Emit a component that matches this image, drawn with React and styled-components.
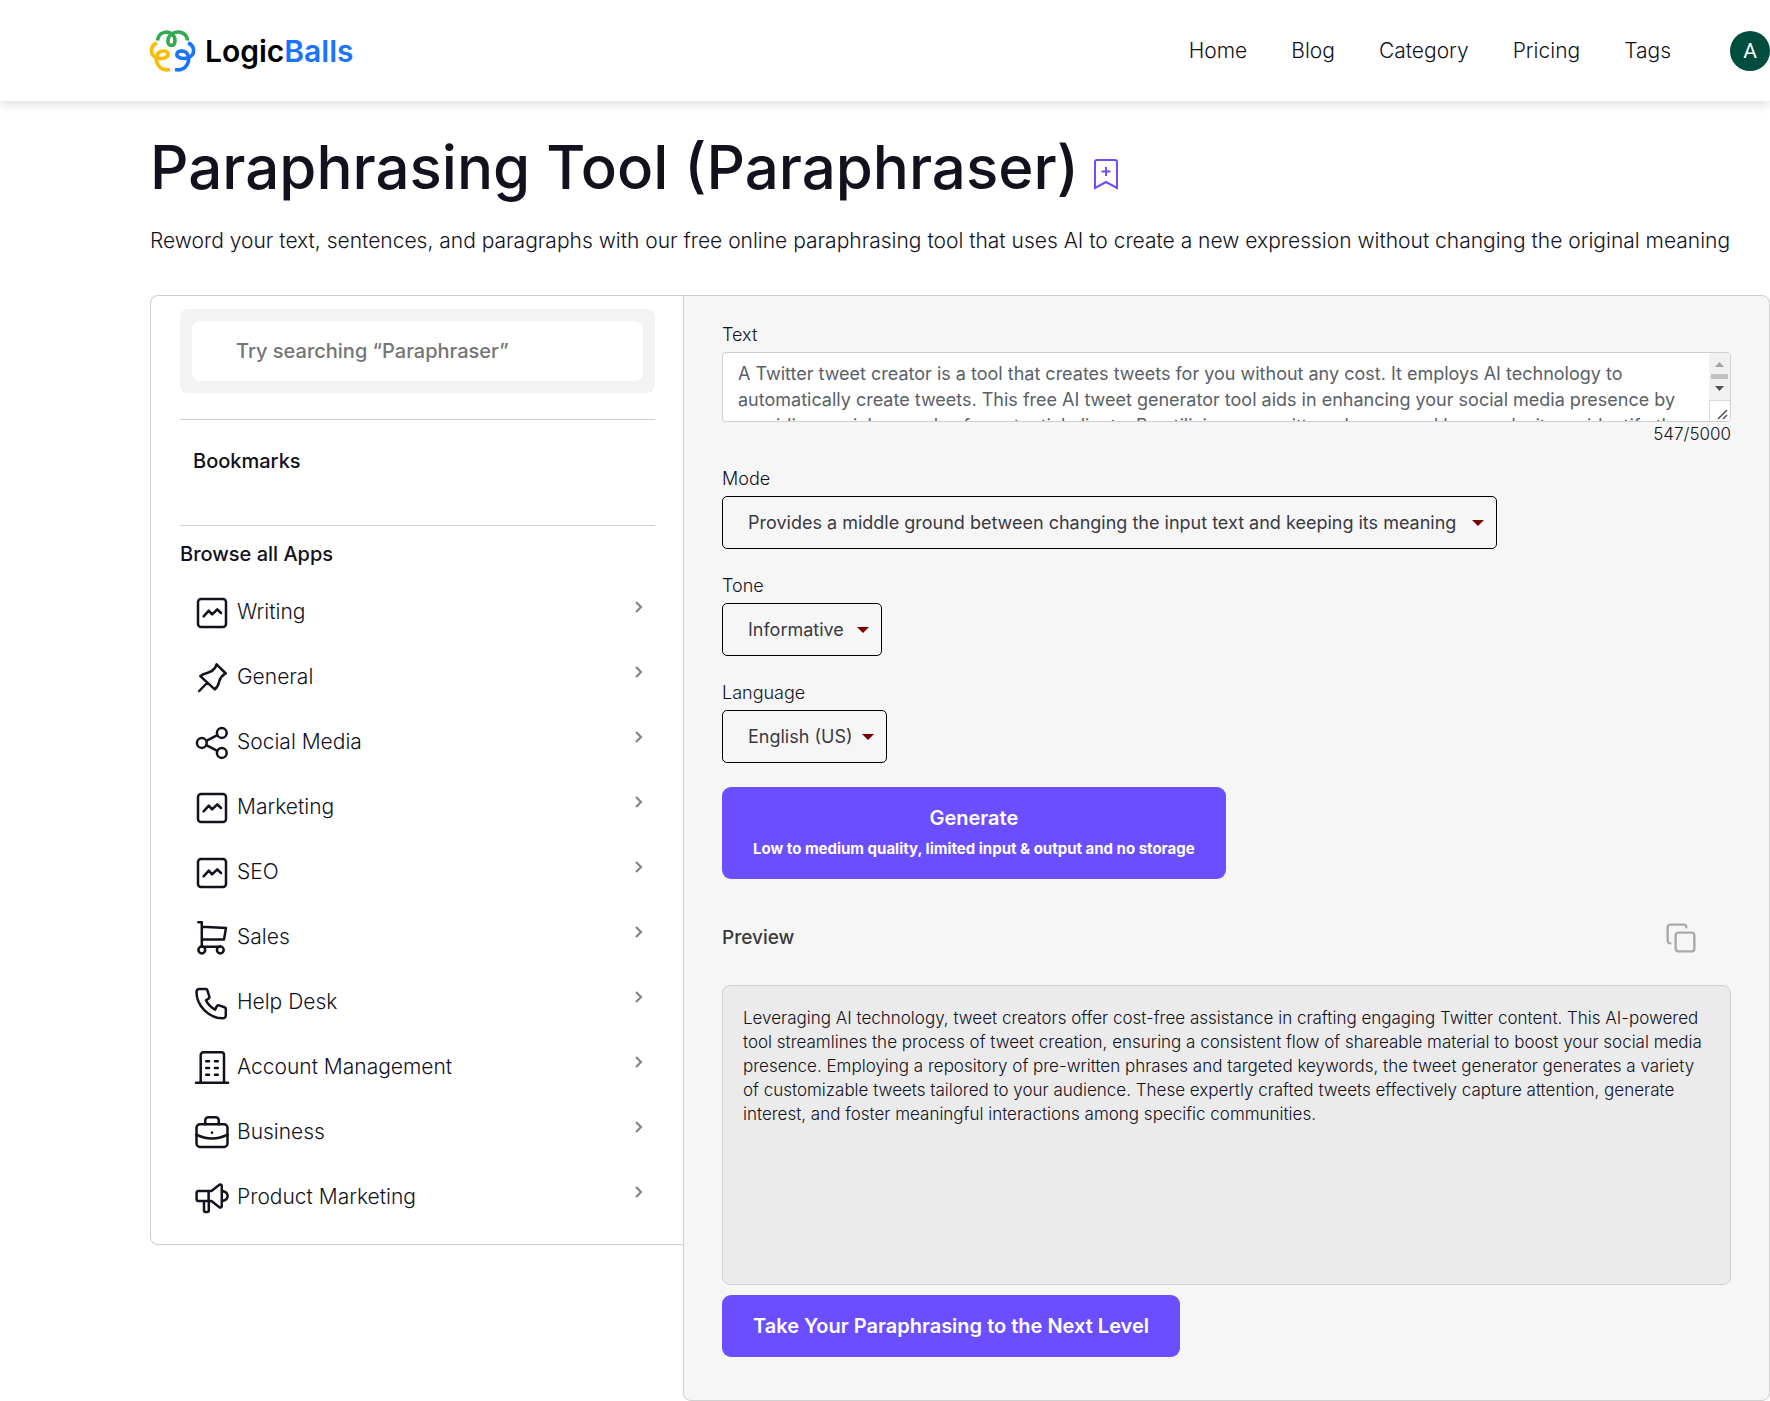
import React, { useState } from "react";
import styled, { createGlobalStyle } from "styled-components";
import { Copy } from "lucide-react";

const ink = "#12111d";
const line = "#d0d0d0";
const violet = "#6b4eff";

const GlobalStyle = createGlobalStyle`
  *, *::before, *::after { box-sizing: border-box; }
  body {
    margin: 0;
    background: #fff;
    color: ${ink};
    font-family: Inter, "Liberation Sans", sans-serif;
    font-weight: 300;
  }
  h1, h2, h3, p, ul { margin: 0; padding: 0; }
  a { color: inherit; text-decoration: none; }
  button, input, select, textarea { font: inherit; color: inherit; }
`;

const Header = styled.header`
  display: flex;
  align-items: center;
  justify-content: space-between;
  height: 101px;
  padding-left: 148px;
  box-shadow: 0 2px 12px rgba(0, 0, 0, 0.16);
`;

const Brand = styled.a`
  display: flex;
  align-items: center;
  gap: 8px;
  font-size: 30px;
  font-weight: 600;
  color: #000;
  span { color: #1b74ff; }
`;

const Nav = styled.nav`
  display: flex;
  align-items: center;
  gap: 44px;
  font-size: 21px;
`;

const Avatar = styled.button`
  width: 40px;
  height: 40px;
  margin-left: 15px;
  padding: 0;
  border: 0;
  border-radius: 50%;
  background: #004d40;
  color: #fff;
  font-family: Roboto, sans-serif;
  font-size: 21px;
  font-weight: 400;
`;

const Main = styled.main`
  padding: 30px 0 0 150px;
`;

const TitleRow = styled.div`
  display: flex;
  align-items: flex-end;
  gap: 14px;
`;

const Title = styled.h1`
  font-size: 60px;
  line-height: 72px;
  font-weight: 500;
`;

const IconButton = styled.button`
  display: flex;
  padding: 0;
  border: 0;
  background: none;
  color: ${(p) => p.$color};
  cursor: pointer;
`;

const BookmarkIcon = styled.svg`
  width: 26px;
  height: 32px;
  margin-bottom: 13px;
  fill: none;
  stroke: currentColor;
  stroke-width: 2;
`;

const Subtitle = styled.p`
  margin: 23px 0 39px;
  font-size: 21px;
  line-height: 30px;
`;

const Workspace = styled.div`
  display: grid;
  grid-template-columns: minmax(0, 533fr) minmax(0, 1087fr);
  align-items: start;
`;

const Sidebar = styled.aside`
  padding: 13px 28px 15px 29px;
  border: 1px solid ${line};
  border-right: 0;
  border-radius: 8px 0 0 8px;
`;

const SearchBox = styled.div`
  padding: 12px;
  border-radius: 8px;
  background: #f3f3f3;
`;

const SearchInput = styled.input`
  display: block;
  width: 100%;
  height: 60px;
  padding: 0 44px;
  border: 0;
  border-radius: 8px;
  background: #fff;
  font-size: 20px;
  font-weight: 500;
  &::placeholder { color: #757575; opacity: 1; }
`;

const Bookmarks = styled.section`
  height: 107px;
  margin-top: 26px;
  padding: 29px 13px;
  border: solid ${line};
  border-width: 1px 0;
`;

const SideHeading = styled.h2`
  font-size: 20px;
  line-height: 24px;
  font-weight: 500;
`;

const Apps = styled.nav`
  padding-top: 16px;
`;

const AppList = styled.ul`
  margin-top: 13px;
  list-style: none;
`;

const AppLink = styled.a`
  display: flex;
  align-items: center;
  height: 65px;
  padding: 0 11px 0 14px;
  font-size: 21px;
  line-height: 26px;
`;

const AppIcon = styled.svg`
  flex: none;
  width: 36px;
  height: 36px;
  margin: 3px 7px 0 0;
  fill: none;
  stroke: ${ink};
  stroke-width: 2.5;
  stroke-linecap: round;
  stroke-linejoin: round;
`;

const Chevron = styled.svg`
  width: 10px;
  height: 14px;
  margin: 0 0 9px auto;
  fill: none;
  stroke: #858585;
  stroke-width: 2.2;
`;

const Panel = styled.section`
  padding: 27px 38px 43px;
  border: 1px solid ${line};
  border-radius: 0 8px 8px 8px;
  background: #f6f6f6;
`;

const Field = styled.div`
  margin-bottom: ${(p) => p.$gap}px;
`;

const Label = styled.label`
  display: block;
  margin-bottom: 5px;
  font-size: 18px;
  line-height: 24px;
`;

const TextFrame = styled.div`
  position: relative;
  height: 70px;
  border: 1px solid ${line};
  border-radius: 4px;
  background: #fff;
  overflow: hidden;
`;

const TextArea = styled.textarea`
  display: block;
  width: 100%;
  height: 100%;
  padding: 8px 36px 8px 15px;
  border: 0;
  outline: 0;
  background: none;
  color: #5a6068;
  font-size: 18px;
  font-weight: 400;
  line-height: 26px;
  resize: none;
  scrollbar-width: none;
`;

const ScrollTrack = styled.svg`
  position: absolute;
  top: 0;
  right: 0;
  width: 21px;
  height: 68px;
  pointer-events: none;
`;

const Counter = styled.div`
  font-size: 17px;
  line-height: 24px;
  text-align: right;
`;

const SelectFrame = styled.div`
  display: grid;
  align-items: center;
  width: ${(p) => p.$width}px;
  max-width: 100%;
  > * { grid-area: 1 / 1; }
`;

const Select = styled.select`
  width: 100%;
  height: 53px;
  padding: 0 30px 0 25px;
  border: 1px solid #000;
  border-radius: 5px;
  background: transparent;
  color: #3a3943;
  font-size: 18px;
  font-weight: 400;
  appearance: none;
`;

const Caret = styled.svg`
  justify-self: end;
  width: 12px;
  height: 6px;
  margin-right: 13px;
  fill: #7a0000;
  pointer-events: none;
`;

const PrimaryButton = styled.button`
  display: block;
  padding: 16px 31px;
  border: 0;
  border-radius: 9px;
  background: ${violet};
  color: #fff;
  font-size: 20px;
  line-height: 30px;
  font-weight: 600;
  text-align: center;
  cursor: pointer;
  small {
    display: block;
    margin-top: 2px;
    font-size: 15px;
    line-height: 28px;
    font-weight: 700;
  }
`;

const PreviewHead = styled.div`
  display: flex;
  align-items: center;
  justify-content: space-between;
  margin: 43px 0 31px;
  padding-right: 34px;
`;

const PreviewTitle = styled.h3`
  font-size: 19px;
  line-height: 30px;
  font-weight: 500;
  color: #3a3a3a;
`;

const Preview = styled.output`
  display: block;
  min-height: 300px;
  margin-bottom: 10px;
  padding: 20px;
  border: 1px solid ${line};
  border-radius: 8px;
  background: #ebebeb;
  font-size: 17px;
  line-height: 24px;
`;

const icons = {
  chart: (
    <>
      <rect x="4" y="4" width="28" height="28" rx="3" />
      <path d="M9.6 21.3l5.2-5.6 3.3 3.6 5.2-5 3.7 3.7" />
    </>
  ),
  pin: (
    <path d="M22.6 4.3l9.2 9.2-1.6.8c-3 2.2-4.4 4-5 7.2-.5 3-1.8 5.6-4.4 7.9L6.3 16.2c1.8-1.8 4.2-2.6 6.8-3.2 3.6-.8 6-2.6 8-5.2zM13 23L5.2 31" />
  ),
  share: (
    <>
      <circle cx="7.8" cy="18" r="4.9" />
      <circle cx="27.8" cy="8" r="4.9" />
      <circle cx="27.8" cy="28" r="4.9" />
      <path d="M12.2 15.8l11.2-5.6M12.2 20.2l11.2 5.6" />
    </>
  ),
  cart: (
    <>
      <path d="M4.3 2.3h3.5v24.4h18.5M7.8 6.7l24.2 1.2-2 11.6H7.8" />
      <circle cx="7.8" cy="30" r="3.4" />
      <circle cx="26.3" cy="30" r="3.4" />
    </>
  ),
  phone: (
    <path d="M5.4 4h6.2a1.8 1.8 0 0 1 1.8 1.3l1.9 6.2a2 2 0 0 1-.9 2.2l-2.4 1.6c1.8 4 4.9 7.2 9.1 9.3l1.6-3.2a2 2 0 0 1 2.4-1l5.4 1.9a1.8 1.8 0 0 1 1.3 1.8v6.3a2.9 2.9 0 0 1-2.9 2.9C15 33.3 2.5 20.8 2.5 7A3 3 0 0 1 5.4 4z" />
  ),
  building: (
    <path d="M2 32.7h32M6.7 32.7V5a2.7 2.7 0 0 1 2.7-2.7h17.9A2.7 2.7 0 0 1 30 5v27.7M12.2 11.3h2.9M20.9 11.3h2.9M12.2 18h2.9M20.9 18h2.9M12.2 24.7h2.9M20.9 24.7h2.9" />
  ),
  briefcase: (
    <>
      <rect x="2.5" y="9.3" width="31" height="22.7" rx="3.5" />
      <path d="M11.2 9.3V5.5a3.2 3.2 0 0 1 3.2-3.2h7.2a3.2 3.2 0 0 1 3.2 3.2v3.8M2.5 19.7c9.5 5 21.5 5 31 0M18 17.6v.2" />
    </>
  ),
  megaphone: (
    <path d="M17.4 11H4.3a1.700 1.700 0 0 0-1.700 1.700v6.600A1.700 1.700 0 0 0 4.300 21h13.100M14.600 11v10M17.400 11l8-6.200a1.500 1.500 0 0 1 2.400 1.200v20a1.500 1.500 0 0 1-2.400 1.200L17.400 21M28 11c7.500 1.200 7.500 8.800 0 10M10 21v9.600a1.400 1.400 0 0 0 1.400 1.400h2a1.400 1.400 0 0 0 1.400-1.400V21" />
  ),
};

const apps = [
  ["Writing", "chart"],
  ["General", "pin"],
  ["Social Media", "share"],
  ["Marketing", "chart"],
  ["SEO", "chart"],
  ["Sales", "cart"],
  ["Help Desk", "phone"],
  ["Account Management", "building"],
  ["Business", "briefcase"],
  ["Product Marketing", "megaphone"],
];

const selects = [
  {
    id: "mode",
    label: "Mode",
    width: 775,
    gap: 25,
    value: "Provides a middle ground between changing the input text and keeping its meaning",
  },
  { id: "tone", label: "Tone", width: 160, gap: 25, value: "Informative" },
  { id: "language", label: "Language", width: 165, gap: 24, value: "English (US)" },
];

const sample =
  "A Twitter tweet creator is a tool that creates tweets for you without any cost. It employs AI technology to automatically create tweets. This free AI tweet generator tool aids in enhancing your social media presence by providing social examples for potential clients. By utilizing pre-written phrases and keywords, it can identify the ideal audience.";

function Logo() {
  const lobe = "M9 16C1.5 19 1.5 28.5 9.5 31C16 32.5 21 30 20 26.5C19 23 12 23 9.5 27C6 34 11 45 22 42.5";
  return (
    <svg width="49" height="48" viewBox="0 0 49 48" fill="none" strokeWidth="3.6" aria-hidden="true">
      <path stroke="#34a853" d="M9.5 13.5C10.5 4.5 20 3.5 24.5 7.5C28.5 11 27.5 18.5 23.5 18.5C18.5 18.5 18.5 10 24.5 6.5C30 3.5 39 5 39.5 13.5" />
      <path stroke="#fbbc04" d={lobe} />
      <path stroke="#1b74ff" d={lobe} transform="translate(49 0) scale(-1 1)" />
    </svg>
  );
}

export default function App() {
  const [text, setText] = useState(sample);
  return (
    <>
      <GlobalStyle />
      <Header>
        <Brand href="#">
          <Logo />
          <div>Logic<span>Balls</span></div>
        </Brand>
        <Nav>
          {["Home", "Blog", "Category", "Pricing", "Tags"].map((name) => (
            <a key={name} href="#">{name}</a>
          ))}
          <Avatar type="button">A</Avatar>
        </Nav>
      </Header>
      <Main>
        <TitleRow>
          <Title>Paraphrasing Tool (Paraphraser)</Title>
          <IconButton type="button" $color={violet} aria-label="Bookmark">
            <BookmarkIcon viewBox="0 0 26 32" aria-hidden="true">
              <path d="M2 30V4a2 2 0 0 1 2-2h18a2 2 0 0 1 2 2v26l-11-6zM13 9v9M8.500 13.500h9" />
            </BookmarkIcon>
          </IconButton>
        </TitleRow>
        <Subtitle>
          Reword your text, sentences, and paragraphs with our free online paraphrasing tool that uses AI to create a new
          expression without changing the original meaning
        </Subtitle>
        <Workspace>
          <Sidebar>
            <SearchBox>
              <SearchInput type="search" aria-label="Search apps" placeholder="Try searching “Paraphraser”" />
            </SearchBox>
            <Bookmarks>
              <SideHeading>Bookmarks</SideHeading>
            </Bookmarks>
            <Apps>
              <SideHeading>Browse all Apps</SideHeading>
              <AppList>
                {apps.map(([name, icon]) => (
                  <li key={name}>
                    <AppLink href="#">
                      <AppIcon viewBox="0 0 36 36" aria-hidden="true">{icons[icon]}</AppIcon>
                      {name}
                      <Chevron viewBox="0 0 10 14" aria-hidden="true">
                        <path d="M2 2l5 5-5 5" />
                      </Chevron>
                    </AppLink>
                  </li>
                ))}
              </AppList>
            </Apps>
          </Sidebar>
          <Panel>
            <Field $gap={21}>
              <Label htmlFor="text">Text</Label>
              <TextFrame>
                <TextArea id="text" value={text} onChange={(e) => setText(e.target.value)} spellCheck={false} />
                <ScrollTrack viewBox="0 0 21 68" aria-hidden="true">
                  <path fill="#f1f1f1" d="M0 0h21v68H0z" />
                  <path fill="#a3a3a3" d="M6 14h9l-4.500-5z" />
                  <path fill="#c1c1c1" d="M2 21h17v5H2z" />
                  <path fill="#505050" d="M6 33h9l-4.500 5z" />
                  <path fill="#fff" stroke="#d9d9d9" d="M.5 47.500h21v21H.5z" />
                  <path stroke="#505050" strokeWidth="1.500" d="M9 66l9-9M14 66l4-4" />
                </ScrollTrack>
              </TextFrame>
              <Counter>547/5000</Counter>
            </Field>
            {selects.map((s) => (
              <Field key={s.id} $gap={s.gap}>
                <Label htmlFor={s.id}>{s.label}</Label>
                <SelectFrame $width={s.width}>
                  <Select id={s.id}>
                    <option>{s.value}</option>
                  </Select>
                  <Caret viewBox="0 0 12 6" aria-hidden="true">
                    <path d="M0 0h12L6 6z" />
                  </Caret>
                </SelectFrame>
              </Field>
            ))}
            <PrimaryButton type="button">
              Generate
              <small>Low to medium quality, limited input &amp; output and no storage</small>
            </PrimaryButton>
            <PreviewHead>
              <PreviewTitle>Preview</PreviewTitle>
              <IconButton type="button" $color="#aaa" aria-label="Copy">
                <Copy size={32} strokeWidth={1.8} />
              </IconButton>
            </PreviewHead>
            <Preview>
              Leveraging AI technology, tweet creators offer cost-free assistance in crafting engaging Twitter content. This
              AI-powered tool streamlines the process of tweet creation, ensuring a consistent flow of shareable material to
              boost your social media presence. Employing a repository of pre-written phrases and targeted keywords, the
              tweet generator generates a variety of customizable tweets tailored to your audience. These expertly crafted
              tweets effectively capture attention, generate interest, and foster meaningful interactions among specific
              communities.
            </Preview>
            <PrimaryButton type="button">Take Your Paraphrasing to the Next Level</PrimaryButton>
          </Panel>
        </Workspace>
      </Main>
    </>
  );
}
